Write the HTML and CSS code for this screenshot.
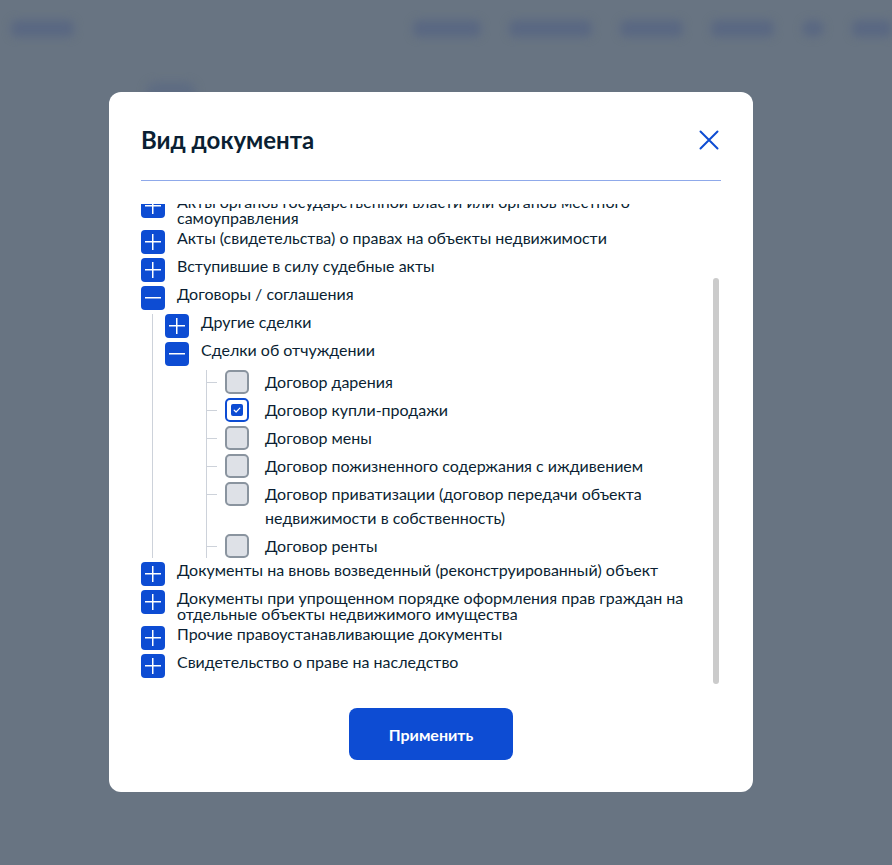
FILE: index.html
```html
<!DOCTYPE html>
<html lang="ru">

<head>
  <meta charset="UTF-8">
  <meta name="viewport" content="width=device-width, initial-scale=1.0">
  <title>Вид документа</title>
  <link rel="stylesheet" href="styles.css">
</head>

<body>
  <div class="page">
    <header class="site-header">
      <span class="blob blob-logo"></span>
      <nav class="site-nav">
        <span class="blob w68"></span>
        <span class="blob w83"></span>
        <span class="blob w63"></span>
        <span class="blob w63"></span>
        <span class="blob w22"></span>
        <span class="blob w40"></span>
      </nav>
    </header>
    <div class="blob blob-crumb"></div>
  </div>

  <div class="dialog" role="dialog" aria-labelledby="dialog-title">
    <div class="dialog-head">
      <h2 class="dialog-title" id="dialog-title">Вид документа</h2>
      <button class="dialog-close" type="button" aria-label="Закрыть">
        <svg width="24" height="24" viewBox="0 0 24 24" fill="none">
          <path d="M3.5 3.5L20.5 20.5M20.5 3.5L3.5 20.5" stroke="#0d4cd3" stroke-width="2" stroke-linecap="round" />
        </svg>
      </button>
    </div>

    <div class="dialog-body">
      <div class="tree-viewport">
        <ul class="tree tree-root">
          <li>
            <div class="node"><span class="toggle plus"></span><span class="node-label">Акты органов государственной власти или органов местного самоуправления</span></div>
          </li>
          <li>
            <div class="node"><span class="toggle plus"></span><span class="node-label">Акты (свидетельства) о правах на объекты недвижимости</span></div>
          </li>
          <li>
            <div class="node"><span class="toggle plus"></span><span class="node-label">Вступившие в силу судебные акты</span></div>
          </li>
          <li>
            <div class="node"><span class="toggle minus"></span><span class="node-label">Договоры / соглашения</span></div>
            <ul class="tree tree-sub">
              <li>
                <div class="node"><span class="toggle plus"></span><span class="node-label">Другие сделки</span></div>
              </li>
              <li>
                <div class="node"><span class="toggle minus"></span><span class="node-label">Сделки об отчуждении</span></div>
                <ul class="tree tree-leaves">
                  <li class="leaf"><span class="check"></span><span class="leaf-label">Договор дарения</span></li>
                  <li class="leaf"><span class="check checked"></span><span class="leaf-label">Договор купли-продажи</span></li>
                  <li class="leaf"><span class="check"></span><span class="leaf-label">Договор мены</span></li>
                  <li class="leaf"><span class="check"></span><span class="leaf-label">Договор пожизненного содержания с иждивением</span></li>
                  <li class="leaf"><span class="check"></span><span class="leaf-label">Договор приватизации (договор передачи объекта недвижимости в собственность)</span></li>
                  <li class="leaf"><span class="check"></span><span class="leaf-label">Договор ренты</span></li>
                </ul>
              </li>
            </ul>
          </li>
          <li>
            <div class="node"><span class="toggle plus"></span><span class="node-label">Документы на вновь возведенный (реконструированный) объект</span></div>
          </li>
          <li>
            <div class="node"><span class="toggle plus"></span><span class="node-label">Документы при упрощенном порядке оформления прав граждан на отдельные объекты недвижимого имущества</span></div>
          </li>
          <li>
            <div class="node"><span class="toggle plus"></span><span class="node-label">Прочие правоустанавливающие документы</span></div>
          </li>
          <li>
            <div class="node"><span class="toggle plus"></span><span class="node-label">Свидетельство о праве на наследство</span></div>
          </li>
        </ul>
      </div>
      <div class="scroll-thumb"></div>
    </div>

    <div class="dialog-foot">
      <button class="btn-apply" type="button">Применить</button>
    </div>
  </div>
</body>

</html>
```

FILE: styles.css
```css
*,
*::before,
*::after {
  box-sizing: border-box;
}
body {
  width: 892px;
  height: 865px;
  margin: 0;
  overflow: hidden;
  background: #687482;
  font-family: Lato, "Noto Sans", sans-serif;
  color: #0b1f33;
}
.page {
  filter: blur(4px);
}
.site-header {
  display: flex;
  height: 37px;
  padding: 20px 0 0 11px;
}
.site-nav {
  display: flex;
  gap: 28px;
  margin-left: 339px;
}
.blob {
  display: block;
  height: 17px;
  border-radius: 6px;
  background: #5a6882;
}
.blob-logo {
  width: 77px;
}
.w68 { width: 68px; }
.w83 { width: 83px; }
.w63 { width: 63px; }
.w22 { width: 22px; border-radius: 50%; }
.w40 { width: 40px; }
.blob-crumb {
  width: 50px;
  height: 20px;
  margin: 45px 0 0 146px;
  border-radius: 10px;
  background: #5e6c82;
}

/* dialog */
.dialog {
  position: absolute;
  top: 92px;
  left: 109px;
  width: 644px;
  padding: 32px;
  border-radius: 12px;
  background: #fff;
}
.dialog-head {
  display: flex;
  align-items: center;
  justify-content: space-between;
  padding-bottom: 24px;
  border-bottom: 1px solid #8fa9ea;
}
.dialog-title {
  margin: 0;
  font-size: 24px;
  line-height: 32px;
  font-weight: 700;
}
.dialog-close {
  display: flex;
  padding: 0;
  border: 0;
  background: none;
}
.dialog-body {
  display: grid;
  grid-template-columns: 1fr 6px;
  column-gap: 8px;
  align-items: start;
  height: 480px;
  margin-top: 23px;
  padding-right: 2px;
}
.tree-viewport {
  height: 480px;
  overflow: hidden;
}
.scroll-thumb {
  height: 406px;
  margin-top: 74px;
  border-radius: 3px;
  background: #cbcbcb;
}
.dialog-foot {
  display: flex;
  justify-content: center;
  margin-top: 24px;
}
.btn-apply {
  width: 164px;
  height: 52px;
  border: 0;
  border-radius: 8px;
  background: #0d4cd3;
  color: #fff;
  font-family: Lato, "Noto Sans", sans-serif;
  font-size: 16px;
  font-weight: 700;
}

/* tree */
.tree {
  display: flex;
  flex-direction: column;
  gap: 4px;
  margin: 0;
  padding: 0;
  list-style: none;
  font-size: 16px;
}
.tree-root {
  margin-top: -10px;
}
.tree-sub {
  margin: 4px 0 0 11px;
  padding-left: 12px;
  border-left: 1px solid #cdd2da;
}
.tree-leaves {
  margin: 4px 0 0 41px;
  padding-left: 18px;
  border-left: 1px solid #cdd2da;
}
.node {
  display: flex;
  align-items: flex-start;
  gap: 12px;
}
.node-label {
  line-height: 16px;
}
.toggle {
  flex: none;
  width: 24px;
  height: 24px;
  border-radius: 4px;
  background-color: #0d4cd3;
  background-repeat: no-repeat;
  background-position: center;
}
.plus {
  background-image: linear-gradient(#fff, #fff), linear-gradient(#fff, #fff);
  background-size: 16px 1.5px, 1.5px 16px;
}
.minus {
  background-image: linear-gradient(#fff, #fff);
  background-size: 16px 1.5px;
}
.leaf {
  position: relative;
  display: flex;
  align-items: flex-start;
  gap: 16px;
}
.leaf::before {
  content: "";
  position: absolute;
  top: 12px;
  left: -18px;
  width: 10px;
  height: 1px;
  background: #cdd2da;
}
.leaf-label {
  line-height: 24px;
}
.check {
  flex: none;
  width: 24px;
  height: 24px;
  border: 2px solid #8a949f;
  border-radius: 5px;
  background: #dee1e7;
}
.check.checked {
  border-color: #0d4cd3;
  background: #fff url("data:image/svg+xml,%3Csvg xmlns='http://www.w3.org/2000/svg' width='12' height='12' viewBox='0 0 12 12'%3E%3Crect width='12' height='12' rx='2' fill='%230d4cd3'/%3E%3Cpath d='M3.2 6.2l1.9 1.8 3.7-3.8' fill='none' stroke='%23fff' stroke-width='1.2' stroke-linecap='round' stroke-linejoin='round'/%3E%3C/svg%3E") center / 12px 12px no-repeat;
}
```
